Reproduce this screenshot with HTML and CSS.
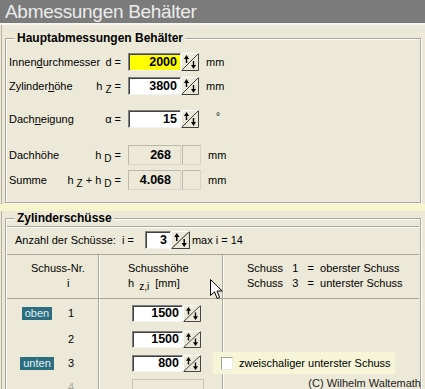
FILE: index.html
```html
<!DOCTYPE html>
<html lang="de">
<head>
    <meta charset="UTF-8">
    <meta name="viewport" content="width=device-width, initial-scale=1.0">
    <title>Abmessungen Behälter</title>
    <link rel="stylesheet" href="styles.css">
</head>
<body>
    <!-- Title bar -->
    <div class="title-bar">Abmessungen Behälter</div>

    <div class="frame">
        <!-- Main dimensions -->
        <fieldset class="group group-main">
            <legend>Hauptabmessungen Behälter</legend>

            <div class="dim-row row-d">
                <div class="dim-name"><span>Innen<u>d</u>urchmesser</span><span class="sym">d =</span></div>
                <div class="value-box highlight">2000</div>
                <svg class="spin" width="18" height="18" viewBox="0 0 18 18"><rect width="18" height="18" fill="#ece9d8"/><path d="M0.5 17.5V0.5H17.5" stroke="#fff" fill="none"/><path d="M0.5 17.5H17.5V0.5" stroke="#404040" fill="none"/><path d="M1 17L17 1" stroke="#404040"/><path d="M5.5 4v6M12.5 8v6" stroke="#000" stroke-width="1.4"/><path d="M3 6L5.5 2L8 6ZM10 12L12.5 16L15 12Z" fill="#000"/></svg>
                <span class="unit">mm</span>
            </div>

            <div class="dim-row row-hz">
                <div class="dim-name"><span>Zylinder<u>h</u>öhe</span><span class="sym">h<sub>Z</sub> =</span></div>
                <div class="value-box">3800</div>
                <svg class="spin" width="18" height="18" viewBox="0 0 18 18"><rect width="18" height="18" fill="#ece9d8"/><path d="M0.5 17.5V0.5H17.5" stroke="#fff" fill="none"/><path d="M0.5 17.5H17.5V0.5" stroke="#404040" fill="none"/><path d="M1 17L17 1" stroke="#404040"/><path d="M5.5 4v6M12.5 8v6" stroke="#000" stroke-width="1.4"/><path d="M3 6L5.5 2L8 6ZM10 12L12.5 16L15 12Z" fill="#000"/></svg>
                <span class="unit">mm</span>
            </div>

            <div class="dim-row row-alpha">
                <div class="dim-name"><span>Dach<u>n</u>eigung</span><span class="sym">α =</span></div>
                <div class="value-box">15</div>
                <svg class="spin" width="18" height="18" viewBox="0 0 18 18"><rect width="18" height="18" fill="#ece9d8"/><path d="M0.5 17.5V0.5H17.5" stroke="#fff" fill="none"/><path d="M0.5 17.5H17.5V0.5" stroke="#404040" fill="none"/><path d="M1 17L17 1" stroke="#404040"/><path d="M5.5 4v6M12.5 8v6" stroke="#000" stroke-width="1.4"/><path d="M3 6L5.5 2L8 6ZM10 12L12.5 16L15 12Z" fill="#000"/></svg>
                <span class="unit degree">°</span>
            </div>

            <div class="dim-row calc-row row-hd">
                <div class="dim-name"><span>Dachhöhe</span><span class="sym">h<sub>D</sub> =</span></div>
                <div class="calc-box">268</div>
                <div class="calc-box blank"></div>
                <span class="unit">mm</span>
            </div>

            <div class="dim-row calc-row row-sum">
                <div class="dim-name"><span>Summe</span><span class="sym">h<sub>Z</sub> + h<sub>D</sub> =</span></div>
                <div class="calc-box">4.068</div>
                <div class="calc-box blank"></div>
                <span class="unit">mm</span>
            </div>
        </fieldset>

        <div class="hint-band"></div>

        <!-- Cylinder shells -->
        <fieldset class="group group-shells">
            <legend>Zylinderschüsse</legend>

            <div class="shell-box">
                <div class="count-row">
                    <span class="count-label">Anzahl der Schüsse:&nbsp; i =</span>
                    <div class="value-box count-box">3</div>
                    <svg class="spin" width="19" height="18" viewBox="0 0 18 18" preserveAspectRatio="none"><rect width="18" height="18" fill="#ece9d8"/><path d="M0.5 17.5V0.5H17.5" stroke="#fff" fill="none"/><path d="M0.5 17.5H17.5V0.5" stroke="#404040" fill="none"/><path d="M1 17L17 1" stroke="#404040"/><path d="M5.5 4v6M12.5 8v6" stroke="#000" stroke-width="1.4"/><path d="M3 6L5.5 2L8 6ZM10 12L12.5 16L15 12Z" fill="#000"/></svg>
                    <span class="count-max">max i = 14</span>
                </div>

                <div class="shell-head">
                    <div class="cell col-nr">Schuss-Nr.<br><span class="head-i">i</span></div>
                    <div class="cell col-height">Schusshöhe<br><span class="head-h">h <sub>z,i</sub>&nbsp; [mm]</span></div>
                    <div class="cell col-note">Schuss&nbsp;&nbsp; 1&nbsp;&nbsp; =&nbsp; oberster Schuss<br>Schuss&nbsp;&nbsp; 3&nbsp;&nbsp; =&nbsp; unterster Schuss</div>
                </div>

                <div class="shell-row first">
                    <div class="cell col-nr"><span class="badge-slot"><span class="badge">oben</span></span><span class="nr">1</span></div>
                    <div class="cell col-height">
                        <div class="value-box shell-box-input">1500</div>
                        <svg class="spin" width="18" height="17" viewBox="0 0 18 18" preserveAspectRatio="none"><rect width="18" height="18" fill="#ece9d8"/><path d="M0.5 17.5V0.5H17.5" stroke="#fff" fill="none"/><path d="M0.5 17.5H17.5V0.5" stroke="#404040" fill="none"/><path d="M1 17L17 1" stroke="#404040"/><path d="M5.5 4v6M12.5 8v6" stroke="#000" stroke-width="1.4"/><path d="M3 6L5.5 2L8 6ZM10 12L12.5 16L15 12Z" fill="#000"/></svg>
                    </div>
                    <div class="cell col-note"></div>
                </div>

                <div class="shell-row">
                    <div class="cell col-nr"><span class="badge-slot"></span><span class="nr">2</span></div>
                    <div class="cell col-height">
                        <div class="value-box shell-box-input">1500</div>
                        <svg class="spin" width="18" height="17" viewBox="0 0 18 18" preserveAspectRatio="none"><rect width="18" height="18" fill="#ece9d8"/><path d="M0.5 17.5V0.5H17.5" stroke="#fff" fill="none"/><path d="M0.5 17.5H17.5V0.5" stroke="#404040" fill="none"/><path d="M1 17L17 1" stroke="#404040"/><path d="M5.5 4v6M12.5 8v6" stroke="#000" stroke-width="1.4"/><path d="M3 6L5.5 2L8 6ZM10 12L12.5 16L15 12Z" fill="#000"/></svg>
                    </div>
                    <div class="cell col-note"></div>
                </div>

                <div class="shell-row">
                    <div class="cell col-nr"><span class="badge-slot"><span class="badge">unten</span></span><span class="nr">3</span></div>
                    <div class="cell col-height">
                        <div class="value-box shell-box-input">800</div>
                        <svg class="spin" width="18" height="17" viewBox="0 0 18 18" preserveAspectRatio="none"><rect width="18" height="18" fill="#ece9d8"/><path d="M0.5 17.5V0.5H17.5" stroke="#fff" fill="none"/><path d="M0.5 17.5H17.5V0.5" stroke="#404040" fill="none"/><path d="M1 17L17 1" stroke="#404040"/><path d="M5.5 4v6M12.5 8v6" stroke="#000" stroke-width="1.4"/><path d="M3 6L5.5 2L8 6ZM10 12L12.5 16L15 12Z" fill="#000"/></svg>
                    </div>
                    <div class="cell col-note">
                        <label class="double-shell"><span class="check"></span>zweischaliger unterster Schuss</label>
                    </div>
                </div>

                <div class="shell-row">
                    <div class="cell col-nr"><span class="badge-slot"></span><span class="nr disabled">4</span></div>
                    <div class="cell col-height">
                        <div class="disabled-box"></div>
                    </div>
                    <div class="cell col-note copyright">(C) Wilhelm Waltemath</div>
                </div>
            </div>
        </fieldset>
    </div>

    <!-- Mouse pointer -->
    <svg class="cursor" width="13" height="21" viewBox="0 0 13 21"><path d="M0.5 0.5V16.5L4.5 12.8L7.2 19.5L9.6 18.5L7 12H12.2Z" fill="#fff" stroke="#000"/></svg>
</body>
</html>
```

FILE: styles.css
```css
/* General */
* {
    box-sizing: border-box;
}

body {
    margin: 0;
    width: 425px;
    height: 389px;
    overflow: hidden;
    position: relative;
    background: #ece9d8;
    font-family: "Liberation Sans", Arial, sans-serif;
    font-size: 11px;
    color: #000;
}

u {
    text-decoration: underline;
    text-underline-offset: 1px;
}

sub {
    font-size: 10px;
    vertical-align: -3px;
    line-height: 0;
    margin-left: 3px;
}

/* Title bar */
.title-bar {
    height: 25px;
    background: #7b7b7b;
    border-bottom: 2px solid #f6f5ee;
    color: #ebebeb;
    font-size: 19px;
    letter-spacing: -0.3px;
    line-height: 23px;
    padding-left: 5px;
}

.frame {
    margin-left: 1px;
    border-left: 1px solid #b4b0a2;
    padding: 6px 4px 0 3px;
    height: 364px;
}

/* Group boxes */
.group {
    margin: 0;
    padding: 0;
    min-width: 0;
    border: 1px solid #aca899;
    box-shadow: inset 1px 1px 0 #fff, 1px 1px 0 #fff;
}

.group legend {
    margin-left: 9px;
    padding: 0 2px;
    font-size: 12px;
    font-weight: bold;
    line-height: 14px;
    background: #ece9d8;
}

.group-main {
    padding-bottom: 12px;
}

/* Dimension rows */
.dim-row {
    display: flex;
    align-items: center;
    height: 18px;
}

.row-d {
    margin-top: 8px;
}

.row-hz {
    margin-top: 6px;
}

.row-alpha {
    margin-top: 15px;
}

.calc-row {
    height: 20px;
}

.row-hd {
    margin-top: 17px;
}

.row-sum {
    margin-top: 5px;
}

.dim-name {
    width: 122px;
    padding-left: 3px;
    padding-right: 7px;
    display: flex;
    justify-content: space-between;
}

.sym {
    white-space: nowrap;
}

.value-box {
    width: 53px;
    height: 18px;
    background: #fff;
    border: 1px solid;
    border-color: #808080 #f4f3ee #f4f3ee #808080;
    box-shadow: inset 1px 1px 0 #404040;
    text-align: right;
    padding-right: 3px;
    font-size: 12.5px;
    font-weight: bold;
    line-height: 16px;
}

.value-box.highlight {
    background: #ffff00;
}

.spin {
    display: block;
    flex: none;
}

.unit {
    margin-left: 7px;
}

.degree {
    margin-left: 17px;
    font-size: 10px;
    align-self: flex-start;
    margin-top: 1px;
}

.calc-box {
    width: 53px;
    height: 20px;
    border: 1px solid;
    border-color: #bdb9aa #d8d5c8 #d8d5c8 #bdb9aa;
    text-align: right;
    padding-right: 9px;
    font-size: 12.5px;
    font-weight: bold;
    line-height: 18px;
}

.calc-box.blank {
    width: 19px;
    margin-left: 1px;
}

/* Yellow band between the groups */
.hint-band {
    height: 7px;
    margin: 1px -4px 0 -5px;
    background: #f6f5cc;
}

/* Cylinder shells */
.shell-box {
    margin: 1px 1px 0;
    border-top: 1px solid #aca899;
    box-shadow: inset 0 1px 0 #fff;
}

.count-row {
    display: flex;
    align-items: center;
    height: 27px;
    padding-left: 8px;
    padding-bottom: 2px;
}

.count-label {
    margin-right: 11px;
}

.count-box {
    width: 26px;
}

.count-max {
    margin-left: 2px;
}

.shell-head,
.shell-row {
    display: grid;
    grid-template-columns: 92px 124px 1fr;
}

.shell-head {
    height: 45px;
    border-top: 1px solid #aca899;
    border-bottom: 1px solid #aca899;
    line-height: 15px;
}

.shell-head .cell {
    padding-top: 6px;
}

.cell {
    border-right: 1px solid #aca899;
    box-shadow: 1px 0 0 #fff;
}

.cell.col-note {
    border-right: none;
    box-shadow: none;
}

.shell-head .col-nr {
    padding-left: 24px;
}

.head-i {
    margin-left: 36px;
}

.shell-head .col-height {
    padding-left: 29px;
}

.head-h sub {
    font-size: 10px;
    margin-left: 2px;
}

.shell-head .col-note {
    padding-left: 24px;
    white-space: nowrap;
}

.shell-row {
    height: 24px;
}

.shell-row.first {
    height: 28px;
}

.shell-row .cell {
    display: flex;
    align-items: center;
}

.badge-slot {
    width: 60px;
    display: flex;
    justify-content: center;
}

.badge {
    background: #2c6e80;
    color: #e0eff0;
    padding: 0 3px;
    line-height: 13px;
}

.nr {
    margin-left: 1px;
}

.nr.disabled {
    color: #a8a597;
}

.shell-row .col-height {
    padding-left: 33px;
}

.shell-box-input {
    width: 51px;
    height: 17px;
    line-height: 15px;
}

.disabled-box {
    width: 72px;
    height: 17px;
    margin-top: 4px;
    align-self: flex-start;
    border: 1px solid #c9c5b5;
}

.double-shell {
    display: flex;
    align-items: center;
    margin-left: -10px;
    width: 182px;
    height: 22px;
    background: #f6f5d8;
    padding-left: 8px;
}

.check {
    width: 12px;
    height: 13px;
    margin-right: 6px;
    background: #fff;
    border: 1px solid;
    border-color: #a7a394 #eeede5 #eeede5 #a7a394;
}

.copyright {
    justify-content: flex-end;
    align-items: flex-start;
    margin-top: -7px;
    margin-right: -2px;
    line-height: 13px;
    color: #222;
}

/* Mouse pointer */
.cursor {
    position: absolute;
    left: 210px;
    top: 279px;
}
```
